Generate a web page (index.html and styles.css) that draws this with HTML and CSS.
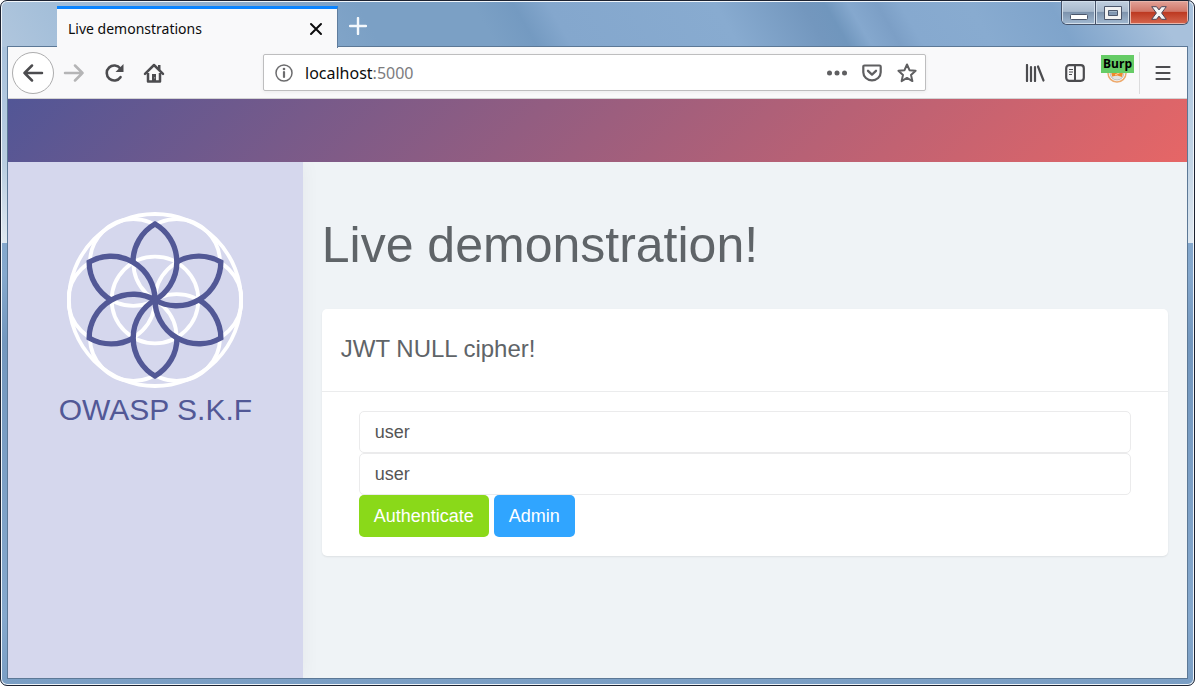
FILE: index.html
```html
<!DOCTYPE html>
<html lang="en">
<head>
<meta charset="utf-8">
<title>Live demonstrations</title>
<link rel="stylesheet" href="styles.css">
</head>
<body>
<div class="window">
  <div class="titlebar">
    <div class="tab">
      <span class="tab-title">Live demonstrations</span>
      <button class="tab-close" aria-label="Close tab"><svg width="14" height="14" viewBox="0 0 14 14"><path d="M2 2l10 10M12 2L2 12" stroke="#0c0c0d" stroke-width="2" stroke-linecap="round"/></svg></button>
    </div>
    <button class="new-tab" aria-label="New tab"><svg width="18" height="18" viewBox="0 0 18 18"><path d="M9 1v16M1 9h16" stroke="#f4f8fc" stroke-width="2.400" stroke-linecap="round"/></svg></button>
    <div class="captions">
      <button class="caption minimize" aria-label="Minimize"><svg width="18" height="6" viewBox="0 0 18 6"><rect x=".5" y=".5" width="17" height="5" rx="1" fill="#fff" stroke="#4b566b"/></svg></button>
      <button class="caption maximize" aria-label="Maximize"><svg width="18" height="14" viewBox="0 0 18 14"><path fill-rule="evenodd" d="M.5 .5h17v13H.5zM4.500 4.500v5h9v-5z" fill="#f2f2f2" stroke="#4b566b"/></svg></button>
      <button class="caption close" aria-label="Close"><svg width="16" height="14" viewBox="0 0 16 14"><path d="M.7 .7h4.800L8 3.900 10.500 .7h4.800L10.600 7l4.700 6.300h-4.800L8 10.100l-2.500 3.200H.7L5.400 7z" fill="#f4f4f4" stroke="#4a4658" stroke-width="1"/></svg></button>
    </div>
  </div>
  <div class="client">
    <div class="toolbar">
      <button class="tool back" aria-label="Back"><svg width="22" height="18" viewBox="0 0 22 18"><path d="M20 9H2.500M10 1.500L2.500 9l7.500 7.500" fill="none" stroke="#4c4c4f" stroke-width="2.500" stroke-linecap="round" stroke-linejoin="round"/></svg></button>
      <button class="tool" aria-label="Forward" disabled><svg width="22" height="18" viewBox="0 0 22 18"><path d="M2 9h17.500M12 1.500L19.500 9 12 16.500" fill="none" stroke="#b5b5b6" stroke-width="2.500" stroke-linecap="round" stroke-linejoin="round"/></svg></button>
      <button class="tool" aria-label="Reload"><svg width="20" height="20" viewBox="0 0 20 20"><path d="M16.500 14.200a7.500 7.500 0 1 1-.2-8.600" fill="none" stroke="#4c4c4f" stroke-width="2.600" stroke-linecap="round"/><path d="M19.500 1v8h-8z" fill="#4c4c4f"/></svg></button>
      <button class="tool" aria-label="Home"><svg width="22" height="20" viewBox="0 0 22 20"><path d="M2 10.800L11 2l9 8.800" fill="none" stroke="#4c4c4f" stroke-width="2.500" stroke-linecap="round" stroke-linejoin="round"/><path d="M5 10v8.500h12V10" fill="none" stroke="#4c4c4f" stroke-width="2.500" stroke-linejoin="round"/><path d="M9 11h4v8H9z" fill="#4c4c4f"/><path d="M15 2h2.500v5L15 5z" fill="#4c4c4f"/><circle cx="11.700" cy="14.800" r=".6" fill="#ccc"/></svg></button>
      <div class="urlbar">
        <svg width="18" height="18" viewBox="0 0 18 18"><circle cx="9" cy="9" r="8" fill="none" stroke="#6c6c6e" stroke-width="1.500"/><path d="M9 8v5" stroke="#6c6c6e" stroke-width="2.200" stroke-linecap="round"/><circle cx="9" cy="5" r="1.300" fill="#6c6c6e"/></svg>
        <span class="url">localhost<span class="port">:5000</span></span>
        <button class="url-action" aria-label="Page actions"><svg width="20" height="6" viewBox="0 0 20 6"><g fill="#5f5f61"><circle cx="2.500" cy="3" r="2.500"/><circle cx="10" cy="3" r="2.500"/><circle cx="17.500" cy="3" r="2.500"/></g></svg></button>
        <button class="url-action" aria-label="Save to Pocket"><svg width="20" height="18" viewBox="0 0 20 18"><path d="M2.500 1.500h15q1.200 0 1.200 1.200v5.500a8.700 8.200 0 0 1-17.400 0V2.700q0-1.200 1.200-1.200z" fill="none" stroke="#5f5f61" stroke-width="2.200"/><path d="M6 6.800l4 3.800 4-3.800" fill="none" stroke="#5f5f61" stroke-width="2.300" stroke-linecap="round" stroke-linejoin="round"/></svg></button>
        <button class="url-action" aria-label="Bookmark this page"><svg width="20" height="20" viewBox="0 0 20 20"><path d="M10 1.500l2.500 5.700 6.100.6-4.600 4.100 1.400 6.200L10 14.900l-5.400 3.200L6 11.900 1.400 7.800l6.100-.6z" fill="none" stroke="#5f5f61" stroke-width="2" stroke-linejoin="round"/></svg></button>
      </div>
      <button class="tool" aria-label="Library"><svg width="20" height="18" viewBox="0 0 20 18"><path d="M2 1v16M6 3v14M10 3v14" stroke="#4c4c4f" stroke-width="2.200" stroke-linecap="round"/><path d="M13 2.500L18.500 16.500" stroke="#4c4c4f" stroke-width="2.200" stroke-linecap="round"/></svg></button>
      <button class="tool" aria-label="Sidebars"><svg width="20" height="18" viewBox="0 0 20 18"><rect x="1.200" y="1.200" width="17.600" height="15.600" rx="3" fill="none" stroke="#4c4c4f" stroke-width="2.200"/><path d="M10 1v16" stroke="#4c4c4f" stroke-width="2"/><path d="M4 5.500h4M4 8h4M4 10.500h3" stroke="#4c4c4f" stroke-width="1.200"/></svg></button>
      <button class="tool burp" aria-label="Burp proxy">
        <svg width="20" height="20" viewBox="0 0 20 20"><circle cx="10" cy="10" r="9" fill="#fff" stroke="#eda96c" stroke-width="1.500"/><circle cx="10" cy="10" r="7" fill="#e4e4e4" stroke="#bbb"/><path d="M4 7h12.500L15 14l-4.500-1.500L5 13.500z" fill="#ef8a2b"/><path d="M8 12l5-2.500" stroke="#fbd3a4"/></svg>
        <span class="badge">Burp</span>
      </button>
      <span class="divider"></span>
      <button class="tool" aria-label="Menu"><svg width="16" height="16" viewBox="0 0 16 16"><path d="M1.500 2h13M1.500 8h13M1.500 14h13" stroke="#4c4c4f" stroke-width="2.200" stroke-linecap="round"/></svg></button>
    </div>
    <header class="banner"></header>
    <div class="page">
      <aside class="sidebar">
        <svg class="logo" width="176" height="176" viewBox="-88 -88 176 176">
          <defs><path id="petal" d="M-22-38A44 44 0 0 1 0-76A44 44 0 0 1 0 0"/></defs>
          <g fill="none" stroke="#fff" stroke-width="3.800">
            <circle r="86"/><circle r="43.300"/>
            <circle cx="43.300" r="43.300"/><circle cx="-43.300" r="43.300"/>
            <circle cx="21.700" cy="-37.500" r="43.300"/><circle cx="-21.700" cy="-37.500" r="43.300"/>
            <circle cx="21.700" cy="37.500" r="43.300"/><circle cx="-21.700" cy="37.500" r="43.300"/>
          </g>
          <g fill="none" stroke="#525896" stroke-width="5.400">
            <use href="#petal"/><use href="#petal" transform="rotate(60)"/><use href="#petal" transform="rotate(120)"/><use href="#petal" transform="rotate(180)"/><use href="#petal" transform="rotate(240)"/><use href="#petal" transform="rotate(300)"/>
          </g>
        </svg>
        <div class="brand">OWASP S.K.F</div>
      </aside>
      <main class="main">
        <h1 class="title">Live demonstration!</h1>
        <section class="card">
          <h2 class="card-title">JWT NULL cipher!</h2>
          <form class="card-body">
            <input class="field" type="text" value="user" aria-label="Username">
            <input class="field" type="text" value="user" aria-label="Password">
            <div class="actions">
              <button class="btn green" type="button">Authenticate</button>
              <button class="btn blue" type="button">Admin</button>
            </div>
          </form>
        </section>
      </main>
    </div>
  </div>
</div>
</body>
</html>
```
FILE: styles.css
```css
* { box-sizing: border-box; }
body {
  margin: 0;
  background: #fff;
  font-family: "Liberation Sans", Arial, sans-serif;
}
button {
  margin: 0;
  padding: 0;
  border: 0;
  background: none;
  font-family: inherit;
}
svg { display: block; flex: none; }

.window {
  display: flex;
  flex-direction: column;
  height: 100vh;
  padding: 1px 6px 6px;
  border: 1px solid #1c2231;
  border-radius: 7px;
  box-shadow: inset 0 0 0 1px #f1f6fb;
  background:
    linear-gradient(#a9c2dc, #b9cde0 60%, #dfe8f0) 0 46px / 8px 196px no-repeat,
    linear-gradient(#abc5df, #c3d5e6 60%, #dfe8f0) 100% 46px / 8px 196px no-repeat,
    linear-gradient(60deg, #b0c6dd 0, #a6c0da 50px, #7ba0c5 330px, #7ba0c5 430px, #749ac1 465px, #84a7cd 495px, #88abd0 640px, #7397be 715px, #7096bd 735px, #85a8ce 755px, #7c9fc6 780px, #86a9cf 800px, #88abd0 860px, #7fa4cb 930px, #a8c1dc 1020px) 0 0 / 100% 46px no-repeat,
    linear-gradient(#7ba0c5, #85a8cd 40%, #7397be 50%, #85a8cd 90%, #7a9ec4);
}
.titlebar {
  display: flex;
  align-items: flex-start;
  height: 44px;
  padding-left: 50px;
}
.tab {
  display: flex;
  align-items: center;
  justify-content: space-between;
  position: relative;
  z-index: 1;
  width: 281px;
  height: 42px;
  margin-top: 4px;
  padding: 0 14px 0 11px;
  border-top: 3px solid #0a84ff;
  border-right: 1px solid #5f7d9e;
  background: #f9f9fa;
  font: 14px/20px "Noto Sans", "Open Sans", sans-serif;
  color: #0c0c0d;
}
.new-tab {
  margin: 15px 0 0 11px;
}
.captions {
  display: flex;
  height: 24px;
  margin: -1px -1px 0 auto;
  border: 1px solid #46536a;
  border-top: 0;
  border-radius: 0 0 6px 6px;
  overflow: hidden;
}
.caption {
  display: grid;
  place-items: center;
  width: 34px;
  border-right: 1px solid #46536a;
  box-shadow: inset 0 0 0 1px #d3dfeb;
  background: linear-gradient(#c0cfdf, #a9bacd 45%, #7e94ae 50%, #a2b9d1);
}
.minimize { align-items: end; padding-bottom: 4px; }
.close {
  width: 58px;
  border-right: 0;
  box-shadow: inset 0 0 0 1px #e8b5aa;
  background: linear-gradient(#e2a298, #d17768 45%, #bd3a22 50%, #d6674f);
}

.client {
  display: flex;
  flex: 1;
  flex-direction: column;
  min-height: 0;
  border: 1px solid #5c7896;
}
.toolbar {
  display: flex;
  flex: none;
  align-items: center;
  height: 52px;
  padding: 0 4px;
  border-bottom: 1px solid #d3d3d3;
  background: #f9f9fa;
}
.tool {
  display: grid;
  place-items: center;
  flex: none;
  width: 40px;
  height: 42px;
}
.back {
  width: 42px;
  border: 1px solid #adadae;
  border-radius: 50%;
  background: #fff;
}
.urlbar {
  display: flex;
  flex: 1;
  align-items: center;
  gap: 15px;
  height: 37px;
  margin: 0 89px;
  padding: 0 8px 0 11px;
  border: 1px solid #bebebf;
  border-radius: 2px;
  background: #fff;
  box-shadow: 0 1px 4px rgba(0, 0, 0, .06);
}
.url {
  flex: 1;
  margin-left: -3px;
  font: 16px/24px "Noto Sans", "Open Sans", sans-serif;
  color: #0c0c0d;
}
.port { color: #7c7c7e; }
.burp {
  position: relative;
  margin: 0 2px;
}
.badge {
  position: absolute;
  top: 3px;
  left: 4px;
  padding: 0 2px;
  background: #66cc66;
  color: #000;
  font: bold 12px/18px "Open Sans", "Noto Sans", sans-serif;
}
.divider {
  width: 1px;
  height: 42px;
  margin-right: 3px;
  background: #dcdcdd;
}

.banner {
  flex: none;
  height: 63px;
  background: linear-gradient(135deg, #525696, #e66666);
}
.page {
  display: flex;
  flex: 1;
  min-height: 0;
  background: #eff3f6;
}
.sidebar {
  display: flex;
  flex: none;
  flex-direction: column;
  align-items: center;
  width: 25%;
  padding-top: 50px;
  background: #d5d7ed;
  box-shadow: 0 0 18px rgba(0, 0, 0, .05);
  clip-path: inset(0 -20px 0 0);
}
.brand {
  font-size: 30px;
  line-height: 44px;
  color: #525896;
}
.main {
  flex: 1;
  padding: 50px 19px 0;
}
.title {
  margin: 0 0 31px;
  font-size: 50px;
  font-weight: 400;
  line-height: 66px;
  color: #5f6468;
}
.card {
  border-radius: 5px;
  background: #fff;
  box-shadow: 0 1px 2px rgba(0, 0, 0, .08);
}
.card-title {
  margin: 0;
  padding: 24px 19px 26px;
  border-bottom: 1px solid #ebeced;
  font-size: 24px;
  font-weight: 400;
  line-height: 32px;
  color: #5f6468;
}
.card-body {
  display: flex;
  flex-direction: column;
  padding: 19px 37px;
}
.field {
  width: 100%;
  height: 42px;
  padding: 0 15px;
  border: 1px solid #ebebec;
  border-radius: 5px;
  background: #fff;
  font: 18px/24px "Liberation Sans", Arial, sans-serif;
  color: #555;
}
.actions {
  display: flex;
  gap: 5px;
}
.btn {
  height: 42px;
  padding: 0 15px;
  border-radius: 5px;
  font-size: 18px;
  color: #fff;
}
.green { background: #8ad919; }
.blue { background: #30a5ff; }
```
